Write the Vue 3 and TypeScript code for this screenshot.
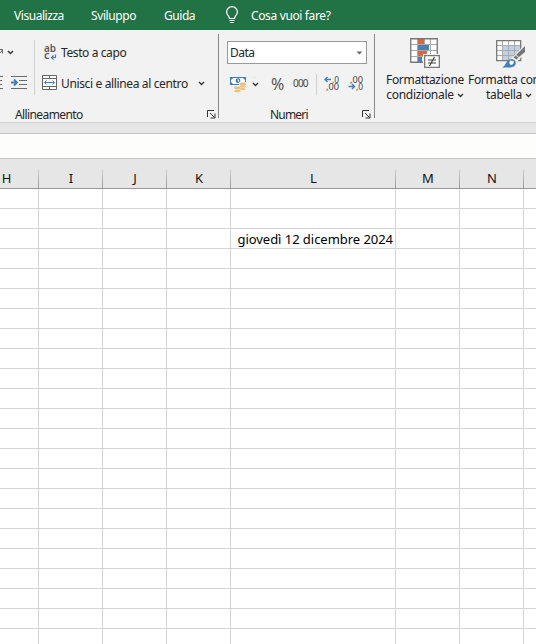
<script setup lang="ts">
interface Column {
  name: string
  width: number
}

const columns: Column[] = [
  { name: 'H', width: 39 },
  { name: 'I', width: 64 },
  { name: 'J', width: 64 },
  { name: 'K', width: 64 },
  { name: 'L', width: 165 },
  { name: 'M', width: 64 },
  { name: 'N', width: 64 },
  { name: '', width: 64 },
]

const rowCount = 23
const dateRow = 3

function cellText(row: number, column: string): string {
  return row === dateRow && column === 'L' ? 'giovedì 12 dicembre 2024' : ''
}
</script>

<template>
  <div class="window">
    <nav class="tabs">
      <span class="tab visualizza">Visualizza</span>
      <span class="tab sviluppo">Sviluppo</span>
      <span class="tab guida">Guida</span>
      <svg class="bulb" width="14" height="18" viewBox="0 0 14 18" fill="none" stroke="#fff" stroke-width="1.2">
        <path d="M4.5 12.5C4.5 10 1.6 9 1.6 5.9a5.4 5.2 0 0 1 10.8 0C12.4 9 9.5 10 9.5 12.5zM4.5 14.5h5M5.3 16.5h3.4" />
      </svg>
      <span class="tab ask">Cosa vuoi fare?</span>
    </nav>

    <div class="ribbon">
      <section class="group alignment">
        <div class="controls">
          <div class="edge">
            <svg width="34" height="54" viewBox="0 0 34 54" fill="none">
              <path d="M0 9.5h2.5v4M0 13l2.5-3" stroke="#666" />
              <path d="M8 11l2.5 2.5L13 11" stroke="#333" stroke-width="1.4" />
              <path d="M0 36.5h3M0 40.5h2M0 44.5h2M0 48.5h3M11 36.5h16M19 40.5h8M19 44.5h8M11 48.5h16" stroke="#6b6b6b" />
              <path d="M11 42.5h6M14 39.5l3 3-3 3" stroke="#3f7fbd" stroke-width="1.8" />
            </svg>
          </div>
          <div class="commands">
            <div class="command">
              <svg class="icon" width="16" height="18" viewBox="0 0 16 18">
                <text x="2" y="9" class="glyph" textLength="12" lengthAdjust="spacingAndGlyphs">ab</text>
                <text x="2" y="16" class="glyph">c</text>
                <path d="M13.5 11.5v3H9.5M11.5 12.5l-2 2 2 2" fill="none" stroke="#3f7fbd" stroke-width="1.2" />
              </svg>
              <span class="wrap-text">Testo a capo</span>
            </div>
            <div class="command">
              <svg class="icon" width="16" height="16" viewBox="0 0 16 16" fill="none">
                <path d="M.5 .5h14v14H.5zM.5 3.5h14M.5 11.5h14M7.5 .5v3M7.5 11.5v3" fill="#fff" stroke="#666" />
                <path d="M2.5 7.5h10M4.5 5.5l-2 2 2 2M10.5 5.5l2 2-2 2" stroke="#3f7fbd" />
              </svg>
              <span class="merge">Unisci e allinea al centro</span>
              <svg class="chevron" width="7" height="5" viewBox="0 0 7 5"><path d="M1 1l2.5 2.5L6 1" /></svg>
            </div>
          </div>
        </div>
        <footer class="caption">
          <span class="caption-alignment">Allineamento</span>
          <svg class="launcher" width="9" height="9" viewBox="0 0 9 9"><path d="M.5 7V.5H7M3 3l4.5 4.5M8 3.5V8H3.5" /></svg>
        </footer>
      </section>

      <section class="group numbers">
        <div class="select">
          <span>Data</span>
          <svg width="7" height="4" viewBox="0 0 7 4"><path d="M.5 .5h5.8L3.4 3.6z" fill="#666" /></svg>
        </div>
        <div class="formats">
          <svg width="17" height="17" viewBox="0 0 17 17">
            <path d="M0 1h16v8H0z" fill="#3f7fbd" />
            <path d="M3 2h10l2 2v2l-2 2H3L1 6V4z" fill="#fff" />
            <circle cx="8" cy="4.7" r="2.4" fill="#3f7fbd" /><path d="M7.5 3l2 2-1.5 1z" fill="#fff" />
            <path d="M9 6h7v8h-4v3H3v-6h6z" fill="#f2f2f2" />
            <g fill="#f0bd72">
              <ellipse cx="12.7" cy="8" rx="3.2" ry="1.5" /><ellipse cx="12.7" cy="10.5" rx="3" ry="1" /><ellipse cx="12.7" cy="13" rx="3" ry="1" />
              <ellipse cx="7.2" cy="12" rx="3.2" ry="1.4" /><ellipse cx="7.5" cy="15" rx="3.2" ry="1.2" />
            </g>
          </svg>
          <svg class="chevron currency-chevron" width="7" height="5" viewBox="0 0 7 5"><path d="M1 1l2.5 2.5L6 1" /></svg>
          <span class="percent">%</span>
          <span class="thousands">000</span>
          <i class="divider"></i>
          <svg class="decimals" width="16" height="16" viewBox="0 0 16 16">
            <text x="8" y="7" textLength="7" lengthAdjust="spacingAndGlyphs">,0</text>
            <text x="2" y="14" textLength="13" lengthAdjust="spacingAndGlyphs">,00</text>
            <path d="M1 3.5h6M3.5 1L1 3.5 3.5 6" />
          </svg>
          <svg class="decimals second" width="16" height="16" viewBox="0 0 16 16">
            <text x="2" y="7" textLength="13" lengthAdjust="spacingAndGlyphs">,00</text>
            <text x="8" y="14" textLength="7" lengthAdjust="spacingAndGlyphs">,0</text>
            <path d="M.5 10.5h6M4 8l2.5 2.5L4 13" />
          </svg>
        </div>
        <footer class="caption">
          <span class="caption-numbers">Numeri</span>
          <svg class="launcher" width="9" height="9" viewBox="0 0 9 9"><path d="M.5 7V.5H7M3 3l4.5 4.5M8 3.5V8H3.5" /></svg>
        </footer>
      </section>

      <section class="styles">
        <div class="large conditional">
          <svg width="31" height="31" viewBox="0 0 31 31">
            <path d="M.75 .75h26.5v23.5H.75z" fill="#fff" />
            <path d="M8 19h4v5H8z" fill="#4a80b8" />
            <path d="M7.5 1v23M14.5 1v23M20.5 1v23M1 6.5h26M1 12.5h26M1 18.5h26" stroke="#aaa" fill="none" />
            <path d="M8 1h6v5H8zM8 13h9v5H8z" fill="#d9683c" />
            <path d="M8 7h11v5H8z" fill="#4a80b8" />
            <path d="M.75 .75h26.5v23.5H.75z" fill="none" stroke="#777" stroke-width="1.3" />
            <path d="M13 16h18v15H13z" fill="#f2f2f2" />
            <path d="M14.7 17.7h14.6v11.6H14.7z" fill="#fff" stroke="#777" stroke-width="1.3" />
            <path d="M18 22h8M18 25h8M24.5 19l-5 9" fill="none" stroke="#444" stroke-width="1.2" />
          </svg>
          <span class="cond-one">Formattazione</span>
          <span class="line"><span class="cond-two">condizionale</span><svg class="chevron" width="7" height="5" viewBox="0 0 7 5"><path d="M1 1l2.5 2.5L6 1" /></svg></span>
        </div>
        <div class="large table">
          <svg class="table-icon" width="30" height="31" viewBox="0 0 30 31">
            <path d="M.7 2.7h24v20H.7z" fill="#fff" />
            <path d="M7 8h18v15H7z" fill="#bed2e7" />
            <path d="M6.5 3v19M12.5 3v19M18.5 3v19M1 7.5h24M1 12.5h24M1 17.5h24" stroke="#aaa" fill="none" />
            <path d="M.7 2.7h24v20H.7z" fill="none" stroke="#777" stroke-width="1.3" />
            <path d="M29 6v9L20 25c-2 5-6 5-10 4 2-2 3-9 8-11z" fill="#f2f2f2" />
            <path d="M29 8v6l-6 5-3-2z" fill="#777" /><path d="M19.5 17.5l3 2-2 2-3-2z" fill="#777" />
            <path d="M6 29.5c4-1 4-8 9.500-8.500 6 .5 6 8.500-2 8.500z" fill="#4080bb" />
            <path d="M14 22.500q-1.500 3.500 1 4.500 3.500-1 2.500-4z" fill="#fff" />
          </svg>
          <span class="table-one">Formatta come</span>
          <span class="line"><span class="table-two">tabella</span><svg class="chevron" width="7" height="5" viewBox="0 0 7 5"><path d="M1 1l2.5 2.5L6 1" /></svg></span>
        </div>
      </section>
    </div>

    <div class="formula-bar"></div>

    <div class="sheet">
      <div class="row head">
        <div v-for="column in columns" :key="column.name" class="heading" :style="{ width: column.width + 'px' }">
          <span :class="{ clipped: column.name === 'H' }">{{ column.name }}</span>
        </div>
      </div>
      <div v-for="row in rowCount" :key="row" class="row">
        <div v-for="column in columns" :key="column.name" class="cell" :style="{ width: column.width + 'px' }">
          {{ cellText(row, column.name) }}
        </div>
      </div>
    </div>
  </div>
</template>

<style>
body {
  overflow: hidden;
}
</style>

<style scoped>
.window {
  width: 536px;
  height: 644px;
  overflow: hidden;
  background: #fff;
  color: #262626;
  font: 12px/16px 'Noto Sans', 'Open Sans', sans-serif;
}
svg { display: block; flex: none; overflow: visible; }
span { white-space: nowrap; }
.tabs { display: flex; align-items: center; height: 30px; padding-left: 14px; background: #217346; color: #fff; }
.tab { flex: none; padding-top: 1px; }
.visualizza { width: 77px; letter-spacing: -.45px; }
.sviluppo { width: 73px; letter-spacing: -.4px; }
.guida { width: 61px; letter-spacing: -.45px; }
.bulb { width: 14px; margin-right: 12px; }
.ask { letter-spacing: -.36px; }
.ribbon { display: flex; box-sizing: border-box; height: 93px; background: #f2f2f2; border-bottom: 1px solid #d2d2d2; }
.group { flex: none; display: flex; flex-direction: column; box-sizing: border-box; height: 84px; margin-top: 4px; border-right: 1px solid #888; }
.alignment { width: 219px; }
.numbers { width: 156px; padding-left: 8px; }
.controls { display: flex; height: 65px; padding-top: 6px; box-sizing: border-box; }
.edge { width: 34px; height: 55px; border-right: 1px solid #cfcfcf; }
.commands { display: flex; flex-direction: column; gap: 7px; margin-left: 7px; }
.command { display: flex; align-items: center; height: 24px; }
.icon { margin-right: 3px; }
.glyph { font: 600 11px 'Noto Sans', sans-serif; fill: #5c5c5c; }
.wrap-text { padding-top: 2px; letter-spacing: -.4px; }
.merge { width: 137px; padding-top: 2px; letter-spacing: -.36px; }
.chevron path { fill: none; stroke: #333; stroke-width: 1.3; }
.caption { display: flex; align-items: center; justify-content: space-between; height: 16px; margin-top: auto; transform: translateY(4px); }
.caption-alignment { margin-left: 15px; letter-spacing: -.6px; }
.caption-numbers { margin-left: 43px; letter-spacing: -.8px; }
.caption span { padding-top: 1px; }
.launcher { margin-right: 2px; }
.launcher path { fill: none; stroke: #333; }
.numbers .launcher { margin-right: 3px; }
.select { display: flex; align-items: center; justify-content: space-between; box-sizing: border-box; width: 140px; height: 23px; margin-top: 7px; padding: 0 3px 0 2px; border: 1px solid #999; background: #fff; letter-spacing: -.55px; }
.formats { display: flex; align-items: center; height: 22px; margin: 9px 0 0 3px; }
.currency-chevron { margin-left: 5px; }
.percent { width: 22px; margin-left: 12px; font-size: 16px; letter-spacing: -1px; color: #555; }
.thousands { width: 17px; margin-top: -2px; font-size: 10px; letter-spacing: -.8px; color: #444; }
.divider { width: 1px; height: 21px; margin: 0 7px 0 6px; background: #cfcfcf; }
.decimals text { font: 9px 'Noto Sans', sans-serif; fill: #444; }
.decimals path { fill: none; stroke: #3f7fbd; stroke-width: 1.4; }
.second { margin-left: 8px; }
.styles { display: flex; width: 161px; padding: 8px 0 0 1px; }
.large { flex: none; display: flex; flex-direction: column; align-items: center; }
.conditional { width: 98px; }
.table { width: 76px; margin-left: -3px; }
.large > svg { margin-bottom: 3px; }
.table-icon { margin-left: 4px; }
.cond-one, .table-one, .cond-two, .table-two { letter-spacing: -.3px; }
.table-one { letter-spacing: -.3px; }
.line { display: flex; align-items: center; gap: 3px; margin-top: -1px; }
.formula-bar { box-sizing: border-box; height: 36px; border-top: 10px solid #e6e6e6; border-bottom: 1px solid #c6c6c6; background: #fdfefc; box-shadow: inset 0 1px #c6c6c6; }
.sheet { width: 590px; }
.row { display: flex; }
.cell { box-sizing: border-box; height: 20px; flex: none; border-right: 1px solid #d4d4d4; border-bottom: 1px solid #d4d4d4; padding: 1px 2px 0 0; text-align: right; font: 13px/18px 'Noto Sans', sans-serif; letter-spacing: -.04px; color: #000; white-space: nowrap; }
.head { height: 30px; background: #e6e6e6; }
.heading { box-sizing: border-box; flex: none; display: flex; justify-content: center; padding-top: 10px; border-bottom: 1px solid #999; font: 13px/18px 'Noto Sans', sans-serif; color: #111; background: linear-gradient(#d0d0d0, #999) right bottom / 1px 19px no-repeat; }
.clipped { margin-right: 26px; }
</style>
